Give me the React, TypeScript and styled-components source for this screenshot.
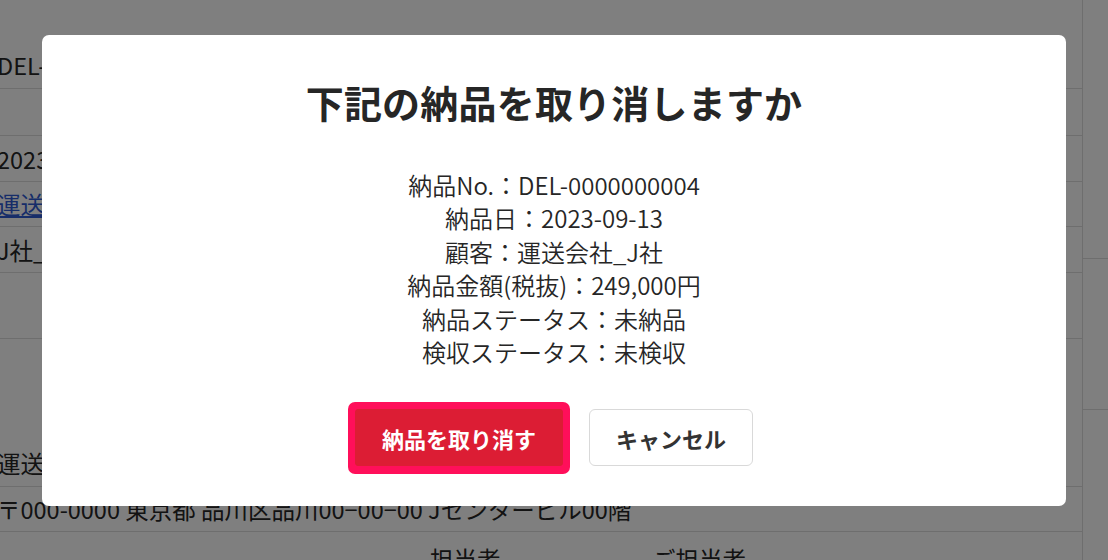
import React from "react";
import styled, { createGlobalStyle } from "styled-components";

const GlobalStyle = createGlobalStyle`
  html, body {
    margin: 0;
    padding: 0;
    background: #fff;
    font-family: "Noto Sans CJK JP", "Noto Sans", sans-serif;
    color: #333;
    overflow: hidden;
  }
`;

const deliveryInfo = [
  "納品No.：DEL-0000000004",
  "納品日：2023-09-13",
  "顧客：運送会社_J社",
  "納品金額(税抜)：249,000円",
  "納品ステータス：未納品",
  "検収ステータス：未検収",
];

const App = () => {
  return (
    <>
      <GlobalStyle />
      <Page>
        <Detail>
          <Row $h={47}>
            <Cell>DEL-0000000004</Cell>
          </Row>
          <Row $h={47} />
          <Row $h={46}>
            <Cell>2023-09-13</Cell>
          </Row>
          <Row $h={45}>
            <Cell>
              <Link href="#">運送会社_J社</Link>
            </Cell>
          </Row>
          <Row $h={46}>
            <Cell>J社_担当者</Cell>
          </Row>
          <Row $h={66} />
          <Row $h={148} $align="flex-end">
            <Cell $pb={6}>運送会社_J社</Cell>
          </Row>
          <Row $h={45}>
            <Cell>〒000-0000 東京都 品川区品川00−00−00 Jセンタービル00階</Cell>
          </Row>
          <Row $h={48} $last>
            <Label $w={430} />
            <Label $w={222}>担当者</Label>
            <Label>ご担当者</Label>
          </Row>
        </Detail>
        <Side>
          <SideRow $h={259} />
          <SideRow $h={151} />
          <SideRow $h={150} $last />
        </Side>
      </Page>

      <Overlay>
        <Modal role="dialog" aria-modal="true">
          <Title>下記の納品を取り消しますか</Title>
          <InfoList>
            {deliveryInfo.map((line) => (
              <InfoLine key={line}>{line}</InfoLine>
            ))}
          </InfoList>
          <Actions>
            <FocusRing>
              <Button $variant="danger">納品を取り消す</Button>
            </FocusRing>
            <Button>キャンセル</Button>
          </Actions>
        </Modal>
      </Overlay>
    </>
  );
};

export default App;

const Page = styled.div`
  display: grid;
  grid-template-columns: 1083px 1fr;
  height: 560px;
  font-size: 23.5px;
  color: #262626;
`;

const Detail = styled.div`
  display: flex;
  flex-direction: column;
  padding-top: 42px;
  border-right: 1px solid #dcdcdc;
  overflow: hidden;
`;

const Row = styled.div<{ $h: number; $align?: string; $last?: boolean }>`
  display: flex;
  align-items: ${({ $align }) => $align || "center"};
  flex: 0 0 ${({ $h }) => $h}px;
  border-bottom: ${({ $last }) => ($last ? "none" : "1px solid #dcdcdc")};
  box-sizing: border-box;
  white-space: nowrap;
`;

const Cell = styled.div<{ $pb?: number }>`
  margin-left: -3px;
  padding-bottom: ${({ $pb }) => $pb || 0}px;
`;

const Label = styled.div<{ $w?: number }>`
  flex: 0 0 ${({ $w }) => ($w ? `${$w}px` : "auto")};
  padding-top: 6px;
`;

const Link = styled.a`
  color: #2f5bd3;
  text-decoration: underline;
`;

const Side = styled.div`
  display: flex;
  flex-direction: column;
`;

const SideRow = styled.div<{ $h: number; $last?: boolean }>`
  flex: 0 0 ${({ $h }) => $h}px;
  border-bottom: ${({ $last }) => ($last ? "none" : "1px solid #dcdcdc")};
  box-sizing: border-box;
`;

const Overlay = styled.div`
  position: fixed;
  inset: 0;
  background: rgba(0, 0, 0, 0.5);
  display: flex;
  justify-content: center;
  align-items: flex-start;
  padding-top: 35px;
`;

const Modal = styled.div`
  width: 1024px;
  box-sizing: border-box;
  background: #fff;
  border-radius: 7px;
  padding: 40px 40px 39px;
  display: flex;
  flex-direction: column;
  align-items: center;
`;

const Title = styled.h2`
  margin: 0;
  font-size: 38px;
  line-height: 53px;
  font-weight: 700;
  letter-spacing: 0.2px;
  color: #262626;
`;

const InfoList = styled.div`
  margin-top: 40px;
  display: flex;
  flex-direction: column;
  align-items: center;
`;

const InfoLine = styled.p`
  margin: 0;
  font-size: 24px;
  line-height: 33.4px;
  font-weight: 350;
  color: #262626;
`;

const Actions = styled.div`
  margin-top: 41px;
  display: flex;
  gap: 26px;
  align-items: center;
`;

const FocusRing = styled.span`
  display: inline-flex;
  margin: -7px;
  padding: 7px;
  border-radius: 7px;
  background: #ff0f5a;
`;

const Button = styled.button<{ $variant?: "danger" }>`
  height: 57px;
  padding: 0 26px;
  font-family: inherit;
  font-size: 22px;
  font-weight: 700;
  border-radius: ${({ $variant }) => ($variant === "danger" ? "3px" : "6px")};
  border: 1px solid
    ${({ $variant }) => ($variant === "danger" ? "#dc1d34" : "#d9d9d9")};
  background: ${({ $variant }) => ($variant === "danger" ? "#dc1d34" : "#fff")};
  color: ${({ $variant }) => ($variant === "danger" ? "#fff" : "#333")};
  cursor: pointer;
  margin-bottom: 1px;
`;
